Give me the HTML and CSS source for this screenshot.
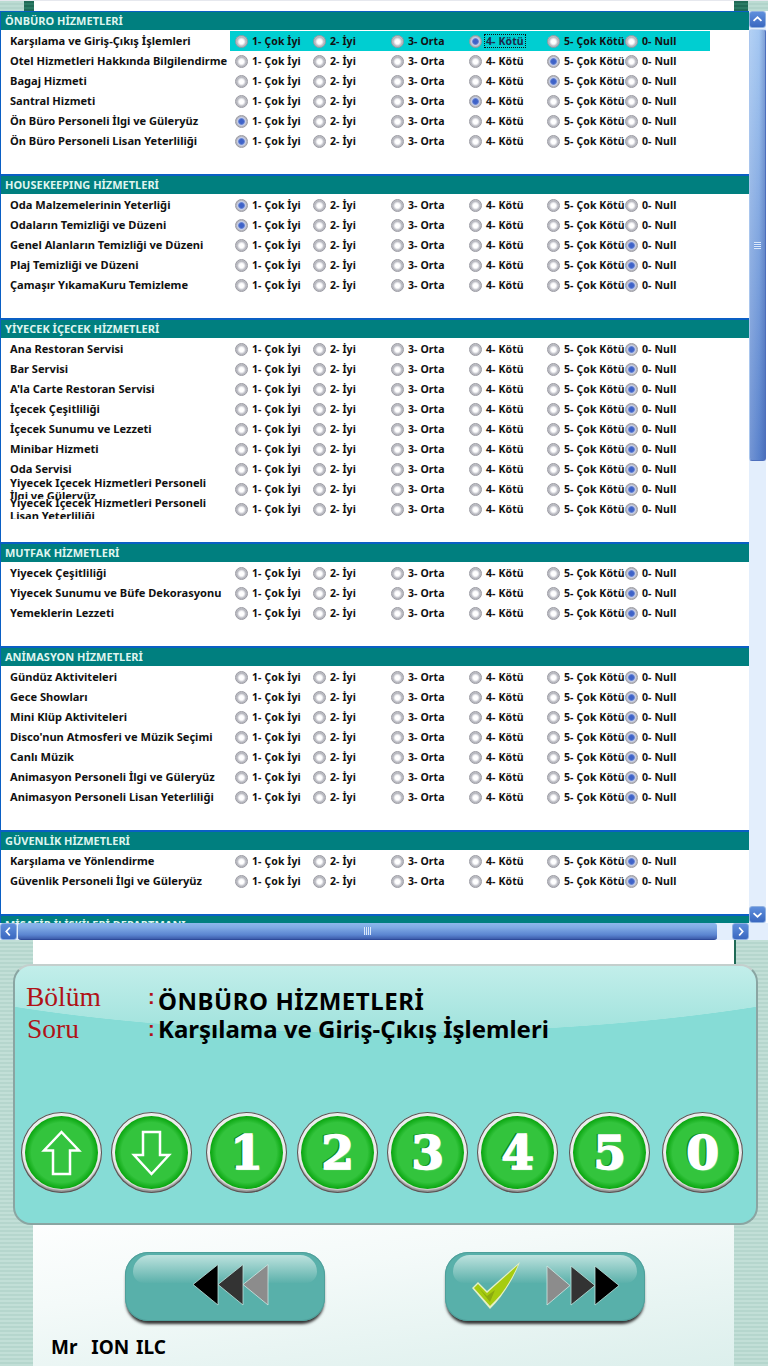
FILE: index.html
```html
<!DOCTYPE html>
<html lang="tr">
<head>
<meta charset="utf-8">
<title>Anket</title>
<link rel="stylesheet" href="styles.css">
</head>
<body>
<div class="page">
  <div class="strip"><i class="s-l"></i><i class="s-d"></i><b></b><i class="s-d2"></i><i class="s-r"></i></div>
  <div class="frame">
    <div class="view" id="view"></div>
    <div class="vbar">
      <div class="sb-btn"><svg viewBox="0 0 17 17"><path d="M4 10l4.500-4 4.500 4" class="chev"/></svg></div>
      <div class="vthumb"><span class="vgrip"></span></div>
      <div class="sb-btn down"><svg viewBox="0 0 17 17"><path d="M4 7l4.500 4 4.500-4" class="chev"/></svg></div>
    </div>
    <div class="hbar">
      <div class="sb-btn"><svg viewBox="0 0 17 17"><path d="M10 4l-4 4.500 4 4.500" class="chev"/></svg></div>
      <div class="hthumb"><span class="hgrip"></span></div>
      <div class="sb-btn"><svg viewBox="0 0 17 17"><path d="M7 4l4 4.500-4 4.500" class="chev"/></svg></div>
    </div>
    <div class="corner"></div>
  </div>
  <div class="lower">
    <div class="panel">
      <div class="info">
        <div class="line"><span class="k">Bölüm</span><span class="c">:</span><span class="v v1">ÖNBÜRO HİZMETLERİ</span></div>
        <div class="line line2"><span class="k k2">Soru</span><span class="c c2">:</span><span class="v">Karşılama ve Giriş-Çıkış İşlemleri</span></div>
      </div>
      <div class="keys">
        <div class="key"><svg viewBox="0 0 81 81"><path class="arr" d="M40.500 20L58 38.500H49V62H32V38.500H23Z"/></svg></div>
        <div class="key g9"><svg viewBox="0 0 81 81"><path class="arr" d="M32 20H49V43H58L40.500 62L23 43H32Z"/></svg></div>
        <div class="key g14"><span>1</span></div>
        <div class="key g10"><span>2</span></div>
        <div class="key g9"><span>3</span></div>
        <div class="key g9"><span>4</span></div>
        <div class="key g11"><span>5</span></div>
        <div class="key g12"><span>0</span></div>
      </div>
    </div>
    <div class="actions">
      <div class="glass back"><svg class="ico-back" viewBox="0 0 77 43" width="77" height="43">
        <path d="M51 1.500V42L26 21.500Z" fill="#8c8c8c" stroke="#cfe9e4" stroke-width=".8" transform="translate(25 0)"/>
        <path d="M51 1.500V42L26 21.500Z" fill="#333" stroke="#bfe3de" stroke-width=".8"/>
        <path d="M26 1.500V42L1 21.500Z" fill="#000" stroke="#bfe3de" stroke-width=".8"/>
      </svg></div>
      <div class="glass next"><svg class="ico-next" viewBox="0 0 150 50" width="150" height="50">
        <path d="M1 28L7 22L16 31L49 2C41 22 31 37 19 49Z" fill="#e6f0c4"/>
        <path d="M3 28L7 24L16 33L47 5C39 23 30 36 19 46Z" fill="#a6cc10"/>
        <path d="M7 27L16 36L24 30L19 42Z" fill="#8cab10"/>
        <path d="M76 6V45L99 25.500Z" fill="#8c8c8c" stroke="#cfe9e4" stroke-width=".8"/>
        <path d="M100 6V45L124 25.500Z" fill="#333" stroke="#bfe3de" stroke-width=".8"/>
        <path d="M124 6V45L148 25.500Z" fill="#000" stroke="#bfe3de" stroke-width=".8"/>
      </svg></div>
    </div>
    <div class="who">Mr&nbsp; ION ILC</div>
  </div>
</div>
<script src="app.js"></script>
</body>
</html>
```
FILE: app.js
```js
var data = [
  ["ÖNBÜRO HİZMETLERİ", [
    ["Karşılama ve Giriş-Çıkış İşlemleri", 4, true],
    ["Otel Hizmetleri Hakkında Bilgilendirme", 5],
    ["Bagaj Hizmeti", 5],
    ["Santral Hizmeti", 4],
    ["Ön Büro Personeli İlgi ve Güleryüz", 1],
    ["Ön Büro Personeli Lisan Yeterliliği", 1]
  ]],
  ["HOUSEKEEPING HİZMETLERİ", [
    ["Oda Malzemelerinin Yeterliği", 1],
    ["Odaların Temizliği ve Düzeni", 1],
    ["Genel Alanların Temizliği ve Düzeni", 0],
    ["Plaj Temizliği ve Düzeni", 0],
    ["Çamaşır YıkamaKuru Temizleme", 0]
  ]],
  ["YİYECEK İÇECEK HİZMETLERİ", [
    ["Ana Restoran Servisi", 0],
    ["Bar Servisi", 0],
    ["A'la Carte Restoran Servisi", 0],
    ["İçecek Çeşitliliği", 0],
    ["İçecek Sunumu ve Lezzeti", 0],
    ["Minibar Hizmeti", 0],
    ["Oda Servisi", 0],
    ["Yiyecek Içecek Hizmetleri Personeli İlgi ve Güleryüz", 0],
    ["Yiyecek Içecek Hizmetleri Personeli Lisan Yeterliliği", 0]
  ]],
  ["MUTFAK HİZMETLERİ", [
    ["Yiyecek Çeşitliliği", 0],
    ["Yiyecek Sunumu ve Büfe Dekorasyonu", 0],
    ["Yemeklerin Lezzeti", 0]
  ]],
  ["ANİMASYON HİZMETLERİ", [
    ["Gündüz Aktiviteleri", 0],
    ["Gece Showları", 0],
    ["Mini Klüp Aktiviteleri", 0],
    ["Disco'nun Atmosferi ve Müzik Seçimi", 0],
    ["Canlı Müzik", 0],
    ["Animasyon Personeli İlgi ve Güleryüz", 0],
    ["Animasyon Personeli Lisan Yeterliliği", 0]
  ]],
  ["GÜVENLİK HİZMETLERİ", [
    ["Karşılama ve Yönlendirme", 0],
    ["Güvenlik Personeli İlgi ve Güleryüz", 0]
  ]],
  ["MİSAFİR İLİŞKİLERİ DEPARTMANI", []]
];
var opts = [[1, "1- Çok İyi"], [2, "2- İyi"], [3, "3- Orta"], [4, "4- Kötü"], [5, "5- Çok Kötü"], [0, "0- Null"]];
var view = document.getElementById("view");
data.forEach(function (sec, si) {
  var s = document.createElement("section");
  s.className = "sec";
  var h = document.createElement("h2");
  h.textContent = sec[0];
  s.appendChild(h);
  sec[1].forEach(function (q, qi) {
    var r = document.createElement("div");
    r.className = "row" + (q[2] ? " active" : "");
    var l = document.createElement("div");
    l.className = "q" + (q[0].length > 40 ? " wrap" : "");
    l.textContent = q[0];
    r.appendChild(l);
    var g = document.createElement("div");
    g.className = "opts";
    opts.forEach(function (o) {
      var lab = document.createElement("label");
      lab.className = "opt";
      var i = document.createElement("input");
      i.type = "radio";
      i.name = "q" + si + "_" + qi;
      i.checked = o[0] === q[1];
      var t = document.createElement("span");
      t.textContent = o[1];
      if (q[2] && o[0] === q[1]) t.className = "focus";
      lab.appendChild(i);
      lab.appendChild(t);
      g.appendChild(lab);
    });
    r.appendChild(g);
    s.appendChild(r);
  });
  view.appendChild(s);
});
```
FILE: styles.css
```css
* { box-sizing: border-box; }
html, body { margin: 0; padding: 0; }
body { width: 768px; height: 1366px; overflow: hidden; background: #fff; font-family: "Noto Sans", sans-serif; }
.page { width: 768px; height: 1366px; display: flex; flex-direction: column; }

.strip { height: 11px; display: flex; border-top: 1px solid #e6e8ee; }
.strip i { display: block; }
.strip b { flex: 1; background: #fff; }
.s-l { width: 24px; background: repeating-linear-gradient(#bcdcd3 0 2px, #b2d4cb 2px 4px); }
.s-d { width: 10px; background: repeating-linear-gradient(#1f6a56 0 2px, #2a7a64 2px 4px); }
.s-d2 { width: 14px; background: repeating-linear-gradient(#1f6a56 0 2px, #2a7a64 2px 4px); }
.s-r { width: 20px; background: repeating-linear-gradient(#bcdcd3 0 2px, #b2d4cb 2px 4px); }

.frame { height: 929px; display: grid; grid-template-columns: 749px 19px; grid-template-rows: 912px 17px; background: #fff; }
.view { overflow: hidden; border-left: 1px solid #0a5fc4; background: #fff; }
.sec { margin: 0 0 23px; }
.sec h2 { margin: 0 0 1px; height: 20px; padding-left: 4px; border-top: 2px solid #0a5fc4; background: #007f7f; color: #dff5ef; font: bold 11px/18px "Noto Sans", sans-serif; white-space: nowrap; }
.sec:first-child h2 { border-top-width: 1px; height: 19px; }
.row { height: 20px; display: flex; align-items: center; }
.q { width: 229px; margin-top: -1px; padding-left: 9px; color: #111; font-size: 11.100px; font-weight: bold; line-height: 15px; white-space: nowrap; }
.q.wrap { white-space: normal; align-self: flex-start; margin-top: -3px; height: 23px; line-height: 13px; overflow: hidden; padding-right: 6px; }
.opts { width: 480px; height: 20px; padding-left: 5px; display: grid; grid-template-columns: repeat(6, 78px); }
.active .opts { background: #00ced1; }
.opt { display: flex; align-items: center; gap: 4px; font-size: 10.500px; line-height: 12px; letter-spacing: .1px; font-weight: bold; color: #111; white-space: nowrap; height: 20px; }
.opt span { margin-top: -1px; }
.opt input { appearance: none; -webkit-appearance: none; width: 13px; height: 13px; margin: 1px 0 0; flex: none; border-radius: 50%; border: 1px solid #9a9aa2; background: radial-gradient(circle at 50% 52%, #fff 0 2px, #e8e8ec 3px, #b5b6bd 4.500px, #c9cad0 6.500px); }
.opt input:checked { background: radial-gradient(circle at 50% 50%, #3f63c8 0 2px, #6d88d4 3px, #c9d2ee 3.800px, #b7b8c0 5px); }
.focus { outline: 1px dotted #111; padding: 0 1px; margin-left: -1px; color: #1c2a4a; }

.sb-btn { width: 17px; height: 17px; border-radius: 3px; border: 1px solid #8fb0e0; background: linear-gradient(#5f8fdc, #3a68c0); flex: none; }
.sb-btn svg { display: block; width: 100%; height: 100%; }
.chev { fill: none; stroke: #fff; stroke-width: 2; }
.vbar { grid-row: 1; grid-column: 2; width: 17px; display: flex; flex-direction: column; background: #e3eefc; }
.vthumb { height: 432px; margin-top: 1px; border-radius: 3px; border: 1px solid #4d6fbd; border-left-color: #a9c6ee; border-top-color: #c0d6f2; background: linear-gradient(90deg, rgba(255,255,255,.15), transparent 60%, rgba(40,70,150,.3)), linear-gradient(#a5c8f2, #5a82cc); display: flex; align-items: center; justify-content: center; }
.vgrip { width: 7px; height: 7px; background: repeating-linear-gradient(#dbe8fa 0 1px, #6f9ade 1px 2px); }
.vbar .down { margin-top: auto; }
.hbar { grid-row: 2; grid-column: 1; display: flex; background: #e3eefc; }
.hthumb { width: 699px; margin-left: 1px; border-radius: 3px; border-bottom: 1px solid #2e4a9a; background: linear-gradient(#8db8ec, #7ea9e4 30%, #5a84d0 75%, #3d5cab); display: flex; align-items: center; justify-content: center; }
.hgrip { width: 7px; height: 8px; background: repeating-linear-gradient(90deg, #dbe8fa 0 1px, #6f9ade 1px 2px); }
.hbar .sb-btn:last-child { margin-left: 15px; }
.corner { grid-row: 2; grid-column: 2; background: #e3eefc; }

.lower {
  flex: 1;
  padding: 24px 10px 0 13px;
  background:
    linear-gradient(#1f6a56, #1f6a56) 734px 0 / 2px 24px no-repeat,
    linear-gradient(172deg, #fff 0 50%, #f4faf9 70%, #dcefec 100%) 33px 0 / 701px 100% no-repeat,
    repeating-linear-gradient(#c2dfd7 0 2px, #b5d6cd 2px 4px);
}
.panel {
  height: 261px;
  border: 2px solid #8aa5a2;
  border-top-color: #c4cfcd;
  border-radius: 18px;
  background:
    radial-gradient(ellipse 600px 121px at 50% -54px, transparent 99.600%, #86dcd6 100%),
    linear-gradient(#c2eeea 0, #9fe2dc 70px);
  display: flex;
  flex-direction: column;
}
.info { height: 146px; padding: 13px 0 0 11px; }
.line { display: flex; height: 36px; }
.line2 { height: 28px; }
.k { width: 122px; height: 36px; color: #b01218; font: 27.500px/36px "Liberation Serif", serif; }
.k2 { padding-left: 1px; height: 28px; line-height: 28px; }
.c { width: 10px; height: 36px; color: #b01218; font: bold 20px/36px "Liberation Sans", sans-serif; }
.c2 { height: 28px; line-height: 28px; }
.v { color: #000; height: 28px; font: bold 24px/28px "Noto Sans", sans-serif; white-space: nowrap; }
.v1 { margin-top: 8px; letter-spacing: .55px; }
.keys { display: flex; padding-left: 6px; }
.g9 { margin-left: 9px; }
.g10 { margin-left: 10px; }
.g11 { margin-left: 11px; }
.g12 { margin-left: 12px; }
.g14 { margin-left: 14px; }
.key { width: 81px; height: 81px; flex: none; border-radius: 50%; background: #ececec; box-shadow: inset 0 0 0 1px #555, inset 0 -3px 2px #8a8a8a; display: flex; align-items: center; justify-content: center; position: relative; overflow: hidden; }
.key::before { content: ""; position: absolute; inset: 4px; border-radius: 50%; background: radial-gradient(circle closest-side, #33c43d 0 82%, #08a50e 100%); }
.key svg { position: relative; width: 81px; height: 81px; display: block; }
.key span { position: relative; color: #fff; font: bold 47px/1 "DejaVu Serif", serif; -webkit-text-stroke: 1.500px #fff; text-shadow: -2px -1px 0 #0c8a1c, 1px 1px 1px #a8ecae; }
.arr { fill: #35c440; stroke: #fff; stroke-width: 2.500; stroke-linejoin: miter; }
.actions { display: flex; padding: 27px 0 0 112px; }
.glass { width: 200px; height: 69px; flex: none; border-radius: 23px; background: #58b0aa; box-shadow: 0 4px 3px -1px #333, inset 0 0 0 1px #4f9f9a; position: relative; display: flex; align-items: center; justify-content: center; }
.glass::before { content: ""; position: absolute; left: 8px; right: 8px; top: 3px; height: 28px; border-radius: 18px 18px 12px 12px; background: linear-gradient(#bde2de, #5cb1ab); }
.glass svg { position: relative; display: block; }
.ico-back { margin: -5px 0 0 10px; }
.ico-next { margin: -4px 0 0 1px; }
.next { margin-left: 120px; }
.who { padding: 14px 0 0 38px; color: #000; font: bold 19px/24px "Noto Sans", sans-serif; word-spacing: 2px; white-space: pre; }
```
